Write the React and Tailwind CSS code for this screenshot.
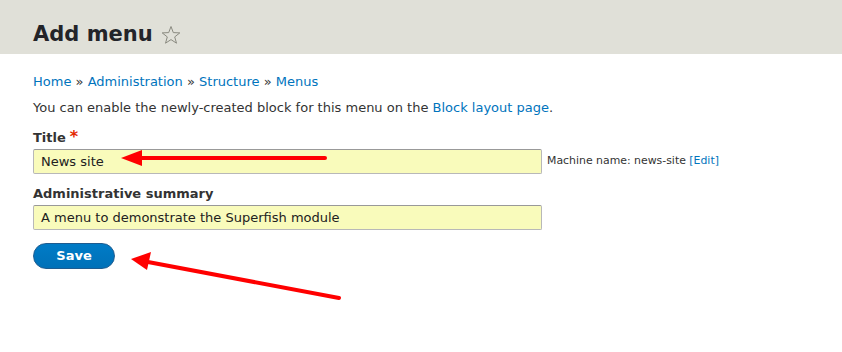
import React from "react";

export default function App() {
  return (
    <div className="relative w-[842px] h-[352px] bg-white text-[#333] overflow-hidden" style={{ fontFamily: '"DejaVu Sans", Verdana, sans-serif' }}>
      <div className="h-[54px] bg-[#e0e0d8] flex items-end pl-[33px] pb-[5px]">
        <h1 className="text-[21px] font-bold leading-[30px] text-[#232429] flex items-center">
          Add menu
          <svg className="ml-[8px] mt-[2px]" width="20" height="20" viewBox="0 0 20 20">
            <path d="M10 1.5 L12.3 7.6 L18.8 7.9 L13.7 11.9 L15.5 18.2 L10 14.6 L4.5 18.2 L6.3 11.9 L1.2 7.9 L7.7 7.6 Z" fill="none" stroke="#8a8a80" strokeWidth="1" strokeLinejoin="round" />
          </svg>
        </h1>
      </div>
      <div className="pl-[33px] pt-[19px]">
        <div className="text-[13px] leading-[18px] text-[#0074bd]">
          <span>Home</span> <span className="text-[#333]">»</span> <span>Administration</span> <span className="text-[#333]">»</span> <span>Structure</span> <span className="text-[#333]">»</span> <span>Menus</span>
        </div>
        <p className="mt-[8px] text-[13px] leading-[18px]">
          You can enable the newly-created block for this menu on the <span className="text-[#0074bd]">Block layout page</span>.
        </p>
        <div className="mt-[12px] text-[13px] font-bold leading-[18px] flex items-start">
          Title<span className="ml-[4px] text-[#e32700] text-[16px] leading-[16px] font-bold">*</span>
        </div>
        <div className="mt-[2px] flex items-center">
          <div className="w-[509px] h-[25px] bg-[#f9fbbb] border border-[#b8b8b8] border-t-[#999] rounded-[2px] pl-[7px] flex items-center text-[13px] text-[#212121]">
            News site
          </div>
          <span className="ml-[5px] text-[10.9px] text-[#333]">
            Machine name: news-site <span className="text-[#0074bd]">[Edit]</span>
          </span>
        </div>
        <div className="mt-[11px] text-[13px] font-bold leading-[18px]">Administrative summary</div>
        <div className="mt-[2px] w-[509px] h-[25px] bg-[#f9fbbb] border border-[#b8b8b8] border-t-[#999] rounded-[2px] pl-[7px] flex items-center text-[13px] text-[#212121]">
          A menu to demonstrate the Superfish module
        </div>
        <button className="mt-[13px] w-[82px] h-[26px] rounded-full bg-[#0071b8] border border-[#1e5c90] text-white text-[13px] font-bold flex items-center justify-center" style={{ background: "linear-gradient(#007bc6, #0071b8)" }}>
          Save
        </button>
      </div>
      <svg className="absolute inset-0 pointer-events-none" width="842" height="352">
        <line x1="325" y1="158" x2="138" y2="158" stroke="#f00" strokeWidth="4" strokeLinecap="round" />
        <polygon points="121,158 142,150 142,166" fill="#f00" />
        <line x1="339" y1="298" x2="148" y2="262" stroke="#f00" strokeWidth="4" strokeLinecap="round" />
        <polygon points="131,259 151,252 147,270" fill="#f00" />
      </svg>
    </div>
  );
}
